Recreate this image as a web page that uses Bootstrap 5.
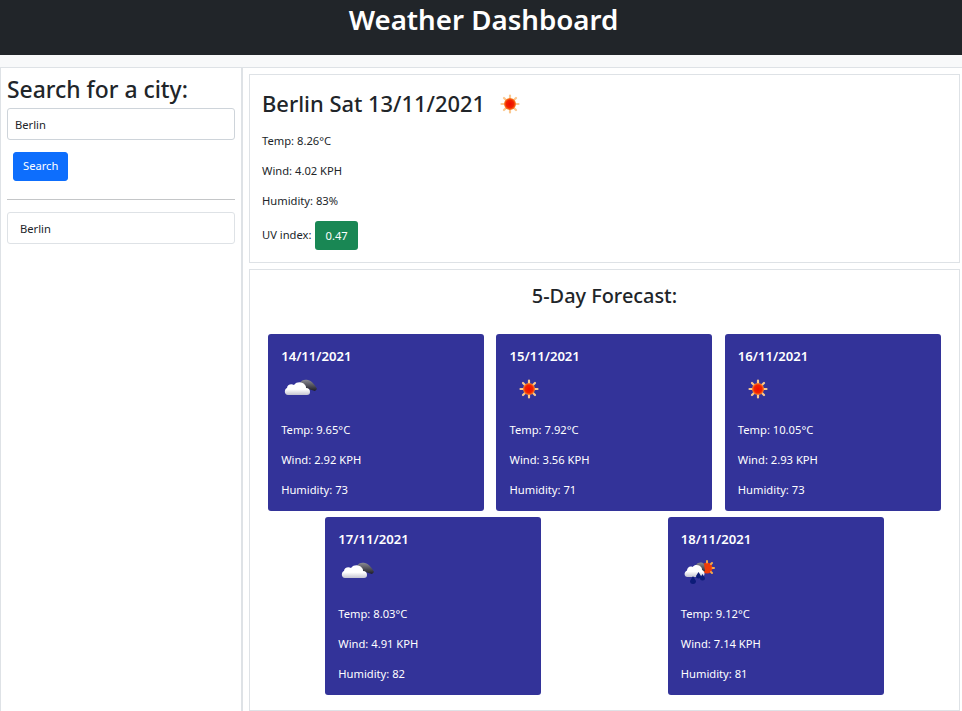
<!DOCTYPE html>
<html lang="en">
  <head>
    <meta charset="UTF-8" />
    <meta name="viewport" content="width=device-width, initial-scale=1.0" />
    <title>Weather Dashboard</title>
    <link href="https://cdn.jsdelivr.net/npm/bootstrap@5.3.0/dist/css/bootstrap.min.css" rel="stylesheet" />
    <script src="https://cdn.jsdelivr.net/npm/bootstrap@5.3.0/dist/js/bootstrap.bundle.min.js"></script>
    <style>
      html, body { height: 711px; overflow: hidden; }
      body {
        font-family: "Noto Sans", "Open Sans", sans-serif;
        font-size: 11.2px;
        color: #212529;
        background: #fff;
      }
      .top-bar { height: 55px; padding-left: 5px; background: #212529; color: #fff; }
      .top-bar h1 { font-size: 27.7px; font-weight: 600; line-height: 38px; margin: 0; }
      .top-gap { height: 13px; background: #f8f9fa; border-bottom: 1px solid #dee2e6; }
      .page-wrap { height: 643px; }
      .side-col { width: 243px; flex: none; padding: 7px 6px; border-left: 1px solid #dee2e6; border-right: 2px solid #dee2e6; }
      .side-col h2 { font-size: 22.9px; font-weight: 500; line-height: 29px; margin: 0 0 4px; }
      .city-input { height: 32px; font-size: 11.2px; padding: 0 7px; border-radius: 3px; border-color: #ced4da; }
      .search-btn { font-size: 11.2px; height: 29px; padding: 0 9px; margin: 12px 0 18px 6px; border-radius: 3px; background: #0d6efd; }
      .side-col hr { margin: 0 0 12px; opacity: 1; border-top: 1px solid #c4c6c8; }
      .city-item { height: 32px; line-height: 31px; padding: 0 12px; border: 1px solid #dee2e6; border-radius: 3px; }
      .main-col { flex: 1; padding: 6px 2px 0 6px; min-width: 0; }
      .now-box { height: 189px; border: 1px solid #dee2e6; padding: 12px; margin-bottom: 6px; }
      .now-box h2 { font-size: 21.9px; font-weight: 500; line-height: 32px; margin: 1px 0 13px; display: flex; align-items: center; }
      .now-box h2 svg { margin-left: 13px; }
      .now-box p { margin: 0 0 14px; line-height: 16px; }
      .uv-line { display: flex; align-items: center; gap: 4px; margin-top: -2px; }
      .uv-pill { font-size: 11.2px; height: 29px; line-height: 29px; padding: 0 10px; border-radius: 3px; background: #198754; color: #fff; }
      .forecast-box { height: 442px; border: 1px solid #dee2e6; padding: 0 12px; }
      .forecast-box h3 { font-size: 19.9px; font-weight: 500; line-height: 26px; text-align: center; margin: 13px 0 25px; }
      .day-row { row-gap: 6px; }
      .day-tile { width: 216px; height: 177px; background: #333399; color: #fff; border-radius: 3px; padding: 13px; }
      .day-tile.low-row { height: 178px; }
      .day-tile h5 { font-size: 13.1px; font-weight: 600; line-height: 19px; margin: 0 0 3px; }
      .day-tile svg { display: block; margin-bottom: 13px; }
      .day-tile p { margin: 0 0 14px; line-height: 16px; }
      .low-row svg { margin-bottom: 14px; }
    </style>
  </head>
  <body>
    <svg width="0" height="0" class="position-absolute">
      <defs>
        <radialGradient id="sunCore">
          <stop offset="0" stop-color="#ee0c00" />
          <stop offset="0.65" stop-color="#f22400" />
          <stop offset="1" stop-color="#fb8a28" />
        </radialGradient>
        <linearGradient id="cloudFill" x1="0" y1="0" x2="0" y2="1">
          <stop offset="0.55" stop-color="#ffffff" />
          <stop offset="1" stop-color="#c4c4d0" />
        </linearGradient>
        <linearGradient id="darkCloud" x1="0" y1="0" x2="0" y2="1">
          <stop offset="0" stop-color="#8c8c94" />
          <stop offset="1" stop-color="#1c1c26" />
        </linearGradient>
        <!-- icons drawn on a 40x40 box, same as the 40px weather images -->
        <symbol id="sun" viewBox="0 0 40 40">
          <g stroke="#fac890" stroke-width="2.200" stroke-linecap="round">
            <path d="M20 11.500v3M20 25.500v3M11.500 20h3M25.500 20h3M14 14l2 2M24 24l2 2M14 26l2-2M24 16l2-2" />
          </g>
          <circle cx="20" cy="20" r="6" fill="url(#sunCore)" />
        </symbol>
        <symbol id="clouds" viewBox="0 0 40 40">
          <path d="M19 14c1-3 5-4 8-3 4 1 7 5 9 9l-2 2-10-3z" fill="url(#darkCloud)" />
          <path d="M7 26c-4 0-4-6-1-7 0-3 4-5 7-3 3-4 9-3 11 0 1 1 1 2 1 3 3 0 4 2 4 4 0 2-1 3-3 3z" fill="url(#cloudFill)" />
        </symbol>
        <symbol id="rainy" viewBox="0 0 40 40">
          <circle cx="26" cy="16" r="5.500" fill="#ee3a08" />
          <path d="M26 9v1.500M33 16h-1.500M31 11l-1 1M31 21l-1-1" stroke="#f6a848" stroke-width="2" stroke-linecap="round" />
          <path d="M15 13c2-3 6-3 8-1l1 7-8 2z" fill="url(#darkCloud)" />
          <path d="M6.500 25c-3.500 0-4-5-.5-6.500 0-3 3-5 5.500-3.500 2-3 7-2.500 8.500 0 1 1 1 2 1 3 1.500.5 2.500 2 2.500 3.500 0 2-1 3.500-2.500 3.500z" fill="url(#cloudFill)" />
          <path d="M12 24l-3 5a3 3 0 0 0 6 0zM17.500 20l-2.500 4a2.500 2.500 0 0 0 5 0zM21.500 22l-2.500 4a2.500 2.500 0 0 0 5 0z" fill="#0c1c78" />
        </symbol>
      </defs>
    </svg>

    <header class="top-bar text-center"><h1>Weather Dashboard</h1></header>
    <div class="top-gap"></div>

    <div class="page-wrap d-flex">
      <aside class="side-col">
        <h2>Search for a city:</h2>
        <input type="text" class="form-control city-input" value="Berlin" />
        <button class="btn btn-primary search-btn d-block">Search</button>
        <hr />
        <div class="city-item">Berlin</div>
      </aside>

      <main class="main-col">
        <section class="now-box">
          <h2>Berlin Sat 13/11/2021 <svg width="24" height="24" viewBox="8 8 24 24"><use href="#sun" width="40" height="40" /></svg></h2>
          <p>Temp: 8.26°C</p>
          <p>Wind: 4.02 KPH</p>
          <p>Humidity: 83%</p>
          <div class="uv-line">UV index: <span class="uv-pill">0.47</span></div>
        </section>

        <section class="forecast-box">
          <h3>5-Day Forecast:</h3>
          <div class="d-flex flex-wrap justify-content-around day-row">
            <div class="day-tile">
              <h5>14/11/2021</h5>
              <svg width="40" height="40"><use href="#clouds" /></svg>
              <p>Temp: 9.65°C</p><p>Wind: 2.92 KPH</p><p>Humidity: 73</p>
            </div>
            <div class="day-tile">
              <h5>15/11/2021</h5>
              <svg width="40" height="40"><use href="#sun" /></svg>
              <p>Temp: 7.92°C</p><p>Wind: 3.56 KPH</p><p>Humidity: 71</p>
            </div>
            <div class="day-tile">
              <h5>16/11/2021</h5>
              <svg width="40" height="40"><use href="#sun" /></svg>
              <p>Temp: 10.05°C</p><p>Wind: 2.93 KPH</p><p>Humidity: 73</p>
            </div>
            <div class="day-tile low-row">
              <h5>17/11/2021</h5>
              <svg width="40" height="40"><use href="#clouds" /></svg>
              <p>Temp: 8.03°C</p><p>Wind: 4.91 KPH</p><p>Humidity: 82</p>
            </div>
            <div class="day-tile low-row">
              <h5>18/11/2021</h5>
              <svg width="40" height="40"><use href="#rainy" /></svg>
              <p>Temp: 9.12°C</p><p>Wind: 7.14 KPH</p><p>Humidity: 81</p>
            </div>
          </div>
        </section>
      </main>
    </div>
  </body>
</html>
